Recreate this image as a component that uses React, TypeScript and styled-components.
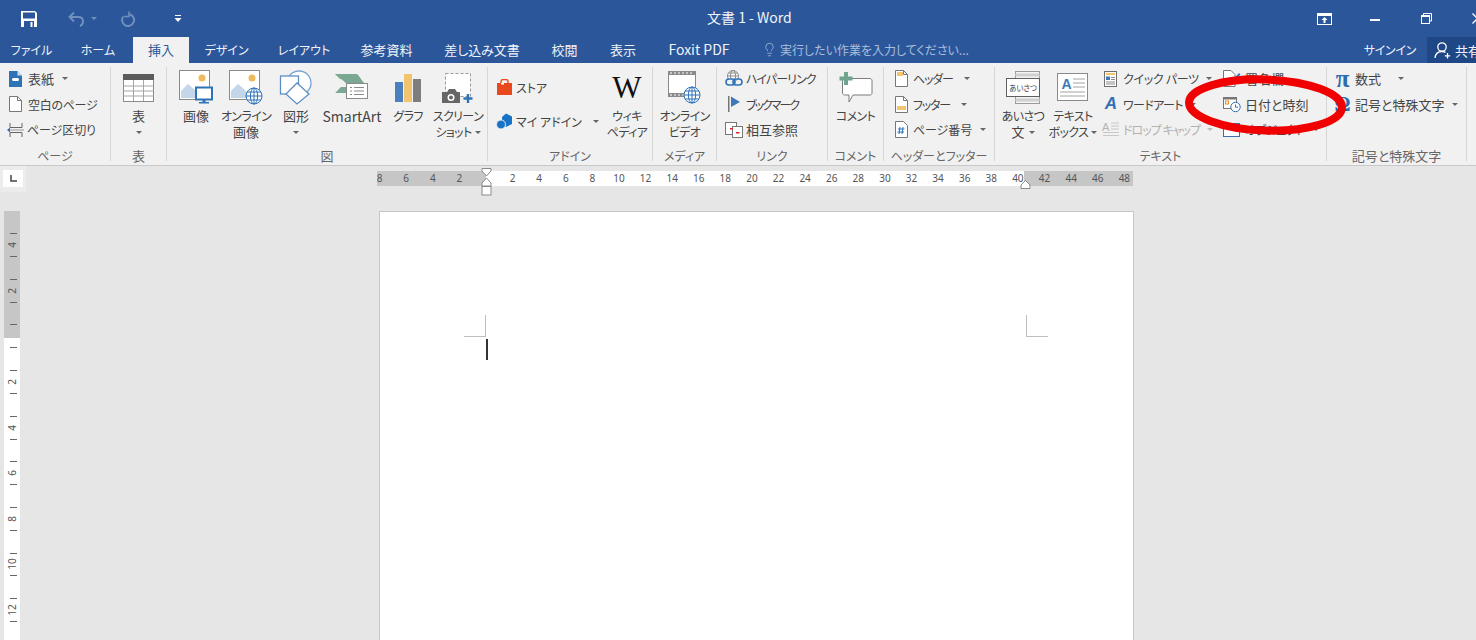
import React from 'react';
import styled, { createGlobalStyle } from 'styled-components';
import { Lightbulb } from 'lucide-react';

const GlobalStyle = createGlobalStyle`
  html, body {
    margin: 0;
    padding: 0;
    background: #e6e6e6;
    overflow: hidden;
  }
  body {
    font-family: "Noto Sans CJK JP", "Noto Sans", sans-serif;
    font-size: 12px;
    font-feature-settings: "palt";
  }
`;

const Window = styled.div`
  position: relative;
  width: 1476px;
  height: 640px;
  overflow: hidden;
  display: flex;
  flex-direction: column;
`;

const TitleBar = styled.div`
  height: 37px;
  flex: none;
  background: #2b579a;
  display: flex;
  align-items: center;
  color: #fff;
`;

const QuickAccess = styled.div`
  width: 707px;
  flex: none;
  display: flex;
  align-items: center;
  padding-left: 21px;
  box-sizing: border-box;
`;

const QuickSlot = styled.div<{ $w: number }>`
  width: ${p => p.$w}px;
  flex: none;
  display: flex;
  align-items: center;
`;

const DocTitle = styled.div`
  font-size: 14px;
  color: #f2f5fa;
  white-space: nowrap;
  padding-bottom: 3px;
`;

const WindowControls = styled.div`
  margin-left: auto;
  display: flex;
  width: 204px;
  flex: none;
  margin-right: -27px;
`;

const WindowButton = styled.div`
  width: 51px;
  height: 37px;
  flex: none;
  display: flex;
  align-items: center;
  justify-content: center;
`;

const TabBar = styled.div`
  height: 26px;
  flex: none;
  background: #2b579a;
  display: flex;
  align-items: stretch;
  overflow: hidden;
`;

const Tab = styled.div<{ $w: number; $active?: boolean; $fs?: number }>`
  width: ${p => p.$w}px;
  flex: none;
  box-sizing: border-box;
  padding-bottom: 2px;
  display: flex;
  align-items: center;
  justify-content: center;
  white-space: nowrap;
  font-size: ${p => p.$fs ?? 12}px;
  color: ${p => (p.$active ? '#2b579a' : '#f0f3f8')};
  background: ${p => (p.$active ? '#f1f1f1' : 'transparent')};
`;

const TellMe = styled.div`
  display: flex;
  align-items: center;
  gap: 3px;
  margin-left: 16px;
  padding-bottom: 2px;
  color: #a9bedb;
  white-space: nowrap;
`;

const Account = styled.div`
  margin-left: auto;
  display: flex;
  align-items: stretch;
  color: #f0f3f8;
`;

const SignIn = styled.div`
  display: flex;
  align-items: center;
  margin-right: 11px;
  padding-bottom: 2px;
  letter-spacing: -0.3px;
`;

const Share = styled.div`
  width: 49px;
  background: #1f4785;
  display: flex;
  align-items: center;
  gap: 3px;
  padding-left: 7px;
  box-sizing: border-box;
  white-space: nowrap;
  overflow: hidden;
  font-size: 13px;

  svg {
    flex: none;
  }
`;

const Ribbon = styled.div`
  height: 103px;
  flex: none;
  box-sizing: border-box;
  background: #f1f1f1;
  border-bottom: 1px solid #c9c9c9;
  padding-top: 4px;
  display: flex;
  align-items: flex-start;
`;

const Group = styled.div<{ $w: number }>`
  width: ${p => p.$w}px;
  height: 94px;
  flex: none;
  box-sizing: border-box;
  display: flex;
  flex-direction: column;
  border-right: 1px solid #d6d6d6;
`;

const GroupBody = styled.div<{ $pl?: number }>`
  flex: 1;
  display: flex;
  align-items: flex-start;
  padding-left: ${p => p.$pl ?? 0}px;
  color: #444;
  min-height: 0;
`;

const GroupLabel = styled.div<{ $k?: boolean }>`
  height: 13px;
  line-height: 13px;
  text-align: center;
  color: #666;
  white-space: nowrap;
  font-size: ${p => (p.$k ? '13px' : '12px')};
  transform: translateY(1px);
`;

const LargeButton = styled.div<{ $w: number }>`
  width: ${p => p.$w}px;
  flex: none;
  display: flex;
  flex-direction: column;
  align-items: center;
`;

const LargeIcon = styled.div`
  height: 41px;
  display: flex;
  align-items: center;
  justify-content: center;
`;

const LargeText = styled.div<{ $latin?: boolean; $k?: boolean }>`
  height: 16px;
  line-height: 16px;
  white-space: nowrap;
  font-size: ${p => (p.$latin ? '14px' : p.$k ? '13px' : '12px')};
  letter-spacing: ${p => (p.$latin || p.$k ? '0' : '-0.6px')};
  display: flex;
  align-items: center;
  justify-content: center;
`;

const SmallStack = styled.div<{ $w?: number; $top?: number; $ml?: number }>`
  width: ${p => (p.$w ? `${p.$w}px` : 'auto')};
  flex: none;
  display: flex;
  flex-direction: column;
  margin-top: ${p => p.$top ?? -1}px;
  margin-left: ${p => p.$ml ?? 0}px;
`;

const SmallRow = styled.div<{ $disabled?: boolean; $h?: number; $gap?: number; $k?: boolean; $ls?: number }>`
  height: ${p => p.$h ?? 25.5}px;
  display: flex;
  align-items: center;
  gap: ${p => p.$gap ?? 4}px;
  white-space: nowrap;
  font-size: ${p => (p.$k ? '13px' : '12px')};
  letter-spacing: ${p => (p.$k ? 0 : p.$ls ?? -0.6)}px;
  color: ${p => (p.$disabled ? '#b1b1b1' : '#444')};
`;

const SmallIcon = styled.div<{ $w?: number }>`
  width: ${p => p.$w ?? 17}px;
  flex: none;
  display: flex;
  align-items: center;
  justify-content: center;
`;

const Caret = styled.span<{ $ml?: number; $light?: boolean }>`
  display: inline-block;
  width: 0;
  height: 0;
  margin-left: ${p => p.$ml ?? 4}px;
  border-left: 3px solid transparent;
  border-right: 3px solid transparent;
  border-top: 3px solid ${p => (p.$light ? '#bbb' : '#666')};
`;

const SymbolGlyph = styled.span<{ $size: number }>`
  font-family: "Liberation Serif", serif;
  font-size: ${p => p.$size}px;
  line-height: 20px;
  color: #2b6cb0;
  font-weight: bold;
`;

const WikiGlyph = styled.span`
  font-family: "Liberation Serif", serif;
  font-size: 31px;
  line-height: 30px;
  color: #111;
`;

const WordArtGlyph = styled.span`
  font-family: "Liberation Sans", sans-serif;
  font-size: 17px;
  line-height: 16px;
  font-style: italic;
  font-weight: bold;
  color: #2f6fb5;
`;

const Workspace = styled.div`
  flex: 1;
  min-height: 0;
  background: #e6e6e6;
  display: flex;
  flex-direction: column;
`;

const RulerRow = styled.div`
  height: 45px;
  flex: none;
  display: flex;
  align-items: flex-start;
`;

const CornerBox = styled.div`
  width: 26px;
  height: 26px;
  flex: none;
  background: #ececec;
  box-sizing: border-box;
  padding: 4px 3px 5px 3px;
`;

const CornerInner = styled.div`
  width: 20px;
  height: 17px;
  background: #fff;
  display: flex;
  align-items: center;
  justify-content: center;
`;

const HRuler = styled.div`
  position: relative;
  margin-left: 351px;
  margin-top: 5px;
  width: 756px;
  height: 15px;
  flex: none;
  display: flex;
`;

const HSegment = styled.div<{ $w: number; $white?: boolean; $pl?: number; $pr?: number; $end?: boolean }>`
  width: ${p => p.$w}px;
  flex: none;
  box-sizing: border-box;
  height: 15px;
  display: flex;
  justify-content: ${p => (p.$end ? 'flex-end' : 'flex-start')};
  padding-left: ${p => p.$pl ?? 0}px;
  padding-right: ${p => p.$pr ?? 0}px;
  background: ${p => (p.$white ? '#fff' : '#c6c6c6')};
  overflow: hidden;
`;

const HNumber = styled.span`
  width: 26.6px;
  flex: none;
  text-align: center;
  font-family: "Noto Sans", sans-serif;
  font-size: 10px;
  line-height: 15px;
  color: #555;
`;

const IndentLeft = styled.svg`
  position: absolute;
  left: 104px;
  top: -3px;
`;

const IndentRight = styled.svg`
  position: absolute;
  left: 643px;
  top: 9px;
`;

const Body = styled.div`
  flex: 1;
  min-height: 0;
  display: flex;
  overflow: hidden;
`;

const VRuler = styled.div`
  width: 16px;
  flex: none;
  margin-left: 4px;
  margin-top: -1px;
  display: flex;
  flex-direction: column;
`;

const VSegment = styled.div<{ $h?: number; $white?: boolean; $pt: number }>`
  height: ${p => (p.$h ? `${p.$h}px` : 'auto')};
  flex: ${p => (p.$h ? 'none' : '1')};
  box-sizing: border-box;
  padding-top: ${p => p.$pt}px;
  background: ${p => (p.$white ? '#fff' : '#c6c6c6')};
  overflow: hidden;
  display: flex;
  flex-direction: column;
`;

const VCell = styled.div`
  height: 11.4px;
  flex: none;
  display: flex;
  align-items: center;
  justify-content: center;
`;

const Tick = styled.span`
  width: 7px;
  height: 1px;
  background: #666;
  margin-left: 2px;
`;

const VNumber = styled.span`
  display: inline-block;
  transform: rotate(-90deg);
  font-family: "Noto Sans", sans-serif;
  font-size: 10px;
  line-height: 10px;
  color: #555;
`;

const Page = styled.div`
  width: 755px;
  height: 520px;
  margin-left: 359px;
  flex: none;
  box-sizing: border-box;
  background: #fff;
  border: 1px solid #c6c6c6;
  padding: 103px 85px 0 84px;
`;

const MarkRow = styled.div`
  display: flex;
  justify-content: space-between;
`;

const CropMark = styled.div<{ $right?: boolean }>`
  width: 21px;
  height: 21px;
  border-bottom: 1px solid #bdbdbd;
  ${p => (p.$right ? 'border-left: 1px solid #bdbdbd;' : 'border-right: 1px solid #bdbdbd;')}
`;

const Caretline = styled.div`
  width: 1.5px;
  height: 21px;
  margin: 2px 0 0 22px;
  background: #333;
`;

const Annotation = styled.svg`
  position: absolute;
  left: 1176px;
  top: 66px;
  pointer-events: none;
`;

const Svg: React.FC<{ w: number; h: number; children: React.ReactNode }> = ({ w, h, children }) => (
  <svg width={w} height={h} viewBox={`0 0 ${w} ${h}`} fill="none">{children}</svg>
);

const BLUE = '#2f73b7';

const SaveIcon = () => (
  <Svg w={16} h={16}>
    <path d="M0 0H14L16 2V16H0Z" fill="#fff" />
    <rect x="2" y="1.5" width="12" height="6" fill="#2b579a" />
    <rect x="3" y="10" width="10" height="6" fill="#2b579a" />
    <rect x="9.5" y="11" width="2" height="5" fill="#fff" />
  </Svg>
);

const UndoIcon = () => (
  <Svg w={32} h={16}>
    <path d="M6 1.5L1.5 6L6 10.5M2 6H10.5C13.5 6 15 8 15 10.5C15 12.5 14 14 12 15" stroke="#6f8fbd" strokeWidth="2" />
    <path d="M23 6L29 6L26 9Z" fill="#6f8fbd" />
  </Svg>
);

const RedoIcon = () => (
  <Svg w={16} h={16}>
    <path d="M9.5 3.2A6 6 0 1 1 3.2 5.5" stroke="#6f8fbd" strokeWidth="2" />
    <path d="M9 0.5V5.5H4" stroke="#6f8fbd" strokeWidth="1.6" />
  </Svg>
);

const CustomizeIcon = () => (
  <Svg w={8} h={8}>
    <rect x="1" y="0" width="6" height="1" fill="#fff" />
    <path d="M0.5 3H7.5L4 7Z" fill="#fff" />
  </Svg>
);

const RibbonDisplayIcon = () => (
  <Svg w={15} h={12}>
    <rect x="0.5" y="0.5" width="14" height="11" stroke="#fff" />
    <rect x="1" y="1" width="13" height="2" fill="#fff" />
    <path d="M7.5 4L10.5 7H8.5V10H6.5V7H4.5Z" fill="#fff" />
  </Svg>
);

const MinimizeIcon = () => (
  <Svg w={11} h={11}><rect x="0" y="6" width="10" height="2" fill="#fff" /></Svg>
);

const RestoreIcon = () => (
  <Svg w={11} h={11}>
    <rect x="0.5" y="2.5" width="8" height="8" stroke="#fff" />
    <path d="M2.5 2V0.5H10.5V8H9" stroke="#fff" />
    <rect x="0" y="2" width="9" height="2" fill="#fff" />
  </Svg>
);

const CloseIcon = () => (
  <Svg w={11} h={11}><path d="M0.5 0.5L10.5 10.5M10.5 0.5L0.5 10.5" stroke="#fff" strokeWidth="1.3" /></Svg>
);

const ShareIcon = () => (
  <Svg w={18} h={18}>
    <circle cx="8" cy="6" r="4.2" stroke="#fff" strokeWidth="1.3" />
    <path d="M1 17C1.5 12.5 4 10.5 8 10.5C9.5 10.5 10.5 10.8 11.5 11.4" stroke="#fff" strokeWidth="1.3" />
    <path d="M13.5 12V17.5M10.8 14.8H16.2" stroke="#fff" strokeWidth="1.3" />
  </Svg>
);

const CoverIcon = () => (
  <Svg w={13} h={16}>
    <path d="M0 0H8.5L13 4.5V16H0Z" fill={BLUE} />
    <path d="M8.5 0L13 4.5H8.5Z" fill="#cfe0f1" />
    <rect x="3" y="7" width="7" height="3" rx="1.5" fill="#fff" />
  </Svg>
);

const BlankIcon = () => (
  <Svg w={13} h={16}>
    <path d="M0.5 0.5H8.5L12.5 4.5V15.5H0.5Z" fill="#fff" stroke="#777" />
    <path d="M8.5 0.5V4.5H12.5" stroke="#777" />
  </Svg>
);

const PageBreakIcon = () => (
  <Svg w={17} h={16}>
    <path d="M3 1V5.5H15V1M3 15V10.5H15V15" stroke="#666" />
    <path d="M0 8L3 5.5V10.5Z" fill={BLUE} />
    <rect x="3" y="7.5" width="14" height="1" fill="#999" />
  </Svg>
);

const TableIcon = () => (
  <Svg w={31} h={28}>
    <rect x="0.5" y="0.5" width="30" height="27" fill="#fff" stroke="#8a8a8a" />
    <rect x="0" y="0" width="31" height="6" fill="#5c5c5c" />
    <path d="M0.5 12H30.5M0.5 17H30.5M0.5 22H30.5M10.5 6V27M20.5 6V27" stroke="#a6a6a6" />
  </Svg>
);

const PictureFrame = () => (
  <>
    <rect x="0.5" y="0.5" width="30" height="29" fill="#fff" stroke="#8a8a8a" />
    <circle cx="23" cy="8" r="3.5" fill="#f0b95c" />
    <path d="M2 28V21L9 14L16 20L22 28Z" fill="#c4d6ea" />
  </>
);

const PictureIcon = () => (
  <Svg w={34} h={35}>
    <PictureFrame />
    <rect x="17" y="17.5" width="16" height="12" fill="#fff" stroke={BLUE} strokeWidth="2" />
    <rect x="23.5" y="30" width="3" height="2" fill={BLUE} />
    <rect x="20" y="32" width="10" height="1.5" fill={BLUE} />
  </Svg>
);

const GlobeMark: React.FC<{ cx: number; cy: number; r: number }> = ({ cx, cy, r }) => (
  <g stroke={BLUE} strokeWidth="1">
    <circle cx={cx} cy={cy} r={r} fill="#fff" />
    <ellipse cx={cx} cy={cy} rx={r * 0.45} ry={r} />
    <path d={`M${cx - r} ${cy}H${cx + r}M${cx - r + 1} ${cy - r * 0.5}H${cx + r - 1}M${cx - r + 1} ${cy + r * 0.5}H${cx + r - 1}M${cx} ${cy - r}V${cy + r}`} />
  </g>
);

const OnlinePictureIcon = () => (
  <Svg w={34} h={35}>
    <PictureFrame />
    <GlobeMark cx={25} cy={26} r={8} />
  </Svg>
);

const ShapesIcon = () => (
  <Svg w={34} h={35}>
    <circle cx="20" cy="13" r="12" fill="#fff" stroke="#7aa5d2" strokeWidth="1.3" />
    <rect x="1.5" y="6" width="18" height="18" fill="#fff" stroke="#5e8fc4" strokeWidth="1.3" />
    <path d="M18 13L30 24L18 34L7 24Z" fill="#fff" stroke="#5e8fc4" strokeWidth="1.3" />
  </Svg>
);

const SmartArtIcon = () => (
  <Svg w={34} h={30}>
    <path d="M0 1H22L29 10H11Z" fill="#7ba892" />
    <path d="M0 20L6 14H12V20Z" fill="#7ba892" />
    <path d="M0 1L8 10L0 20Z" fill="#f1f1f1" />
    <path d="M0 1H22L26 6H5Z" fill="#7ba892" />
    <rect x="11.5" y="10.5" width="21" height="15" fill="#fff" stroke="#8a8a8a" />
    <path d="M15 14.5H17M19 14.5H29M15 18H17M19 18H29M15 21.5H17M19 21.5H29" stroke="#8a8a8a" />
  </Svg>
);

const ChartIcon = () => (
  <Svg w={27} h={30}>
    <rect x="0" y="9" width="8" height="20" fill="#4a80bd" />
    <rect x="9" y="1" width="8" height="28" fill="#f2c46f" />
    <rect x="18" y="6" width="8" height="23" fill="#7e7e7e" />
  </Svg>
);

const ScreenshotIcon = () => (
  <Svg w={32} h={32}>
    <rect x="3.5" y="1.5" width="25" height="23" fill="#fff" stroke="#9a9a9a" strokeDasharray="3 2" />
    <path d="M0 20H5L7 17H13L15 20H18V31H0Z" fill="#666" />
    <circle cx="9" cy="25.5" r="3.5" fill="#fff" />
    <circle cx="9" cy="25.5" r="2" fill="#666" />
    <path d="M26 22V31M21.5 26.5H30.5" stroke={BLUE} strokeWidth="2.4" />
  </Svg>
);

const StoreIcon = () => (
  <Svg w={17} h={17}>
    <path d="M1 4H16V16H1Z" fill="#e8481c" />
    <path d="M5 5V2.5C5 1 6 0.5 7 0.5H10C11 0.5 12 1 12 2.5V5" stroke="#e8481c" strokeWidth="1.4" />
    <rect x="5" y="4" width="3" height="1.5" fill="#fff" />
  </Svg>
);

const AddinIcon = () => (
  <Svg w={17} h={17}>
    <path d="M10 0.5L16 3.5V11L10 14L6 12V4Z" fill="#1673c5" />
    <circle cx="5" cy="11.5" r="4.5" fill="#1673c5" stroke="#f1f1f1" />
  </Svg>
);

const VideoIcon = () => (
  <Svg w={33} h={33}>
    <rect x="0.5" y="0.5" width="27" height="25" fill="#fff" stroke="#8a8a8a" />
    <rect x="0" y="0" width="28" height="4" fill="#8a8a8a" />
    <rect x="0" y="22" width="28" height="4" fill="#8a8a8a" />
    <path d="M2 2H26M2 24H26" stroke="#fff" strokeDasharray="2 2" />
    <GlobeMark cx={24} cy={24} r={8} />
  </Svg>
);

const HyperlinkIcon = () => (
  <Svg w={18} h={17}>
    <g stroke="#8a8a8a">
      <circle cx="8" cy="6" r="5.5" fill="#fff" />
      <ellipse cx="8" cy="6" rx="2.5" ry="5.5" />
      <path d="M2.5 6H13.5M3.5 3H12.5" />
    </g>
    <rect x="1" y="9" width="9" height="6" rx="3" fill="#f1f1f1" stroke="#2f73b7" strokeWidth="1.6" />
    <rect x="8" y="9" width="9" height="6" rx="3" stroke="#2f73b7" strokeWidth="1.6" />
  </Svg>
);

const BookmarkIcon = () => (
  <Svg w={14} h={17}>
    <rect x="1" y="0" width="1.5" height="16" fill="#777" />
    <path d="M4 0.5L13 6L4 11Z" fill="#3d79b8" />
  </Svg>
);

const CrossRefIcon = () => (
  <Svg w={18} h={16}>
    <rect x="0.5" y="0.5" width="11" height="12" fill="#fff" stroke="#777" />
    <rect x="7.5" y="4.5" width="10" height="11" fill="#fff" stroke="#777" />
    <rect x="5" y="6" width="3" height="1.5" fill="#d92b1f" />
    <rect x="11" y="10" width="3.5" height="1.5" fill="#d92b1f" />
  </Svg>
);

const CommentIcon = () => (
  <Svg w={34} h={31}>
    <path d="M5.5 6.5H31C32 6.5 33 7.5 33 8.5V21C33 22 32 23 31 23H14L10 30V23H5.5C4.5 23 3.5 22 3.5 21V8.5C3.5 7.5 4.5 6.5 5.5 6.5Z" fill="#fff" stroke="#7d7d7d" />
    <path d="M7 0V13M0.5 6.5H13.5" stroke="#6fa58f" strokeWidth="4" />
  </Svg>
);

const HeaderIcon: React.FC<{ band: 'top' | 'bottom' }> = ({ band }) => (
  <Svg w={13} h={17}>
    <path d="M0.5 0.5H8.5L12.5 4.5V16.5H0.5Z" fill="#fff" stroke="#777" />
    <path d="M8.5 0.5V4.5H12.5" stroke="#777" />
    <rect x="2" y={band === 'top' ? 2 : 10} width={band === 'top' ? 6 : 9} height="4" fill="#f2c46f" />
  </Svg>
);

const PageNumberIcon = () => (
  <Svg w={13} h={17}>
    <path d="M0.5 0.5H8.5L12.5 4.5V16.5H0.5Z" fill="#fff" stroke="#777" />
    <path d="M5 6L4 13M8 6L7 13M3 8H9.5M2.5 11H9" stroke={BLUE} />
  </Svg>
);

const GreetingIcon = () => (
  <Svg w={35} h={34}>
    <rect x="9.5" y="0.5" width="24" height="32" fill="#f3f3f3" stroke="#9a9a9a" />
    <rect x="9.5" y="2.5" width="24" height="3" fill="#d0d0d0" />
    <rect x="9.5" y="27.5" width="24" height="3" fill="#d0d0d0" />
    <rect x="0.5" y="7.5" width="33" height="18" fill="#fff" stroke="#5f5f5f" />
    <text x="3" y="20" fontSize="8.5" fill="#444" fontFamily="Noto Sans CJK JP" textLength="28" lengthAdjust="spacingAndGlyphs">あいさつ</text>
  </Svg>
);

const TextBoxIcon = () => (
  <Svg w={32} h={29}>
    <rect x="0.5" y="0.5" width="30" height="27" fill="#fff" stroke="#8a8a8a" />
    <text x="4.5" y="16" fontSize="14" fontWeight="bold" fill="#3d79b8" fontFamily="Liberation Sans">A</text>
    <path d="M16 6H28M16 10H28M16 14H28M3 19H28M3 23H28" stroke="#a3a3a3" />
  </Svg>
);

const QuickPartsIcon = () => (
  <Svg w={13} h={16}>
    <rect x="0.5" y="0.5" width="12" height="15" fill="#fff" stroke="#6f6f6f" />
    <rect x="2" y="2" width="9" height="2" fill="#f2c46f" />
    <rect x="2" y="5.5" width="4" height="3.5" fill="#3d79b8" />
    <path d="M7 6.5H11M7 8.5H11M2 11H11M2 13H11" stroke="#8a8a8a" />
  </Svg>
);

const DropCapIcon = () => (
  <Svg w={18} h={17}>
    <text x="0" y="10" fontSize="11" fill="#b3b3b3" fontFamily="Liberation Sans">A</text>
    <path d="M9 2H17M9 5H17M9 8H17M1 11.5H17M1 14.5H17" stroke="#c8c8c8" />
  </Svg>
);

const SignatureIcon = () => (
  <Svg w={18} h={17}>
    <path d="M0.5 0.5H8L12 4.5V16.5H0.5Z" fill="#fff" stroke="#777" />
    <path d="M8 12L16 3L17.5 4.5L9.5 13L7.5 14Z" fill={BLUE} />
  </Svg>
);

const DateTimeIcon = () => (
  <Svg w={18} h={17}>
    <rect x="0.5" y="1.5" width="13" height="11" fill="#fff" stroke="#777" />
    <rect x="0" y="1" width="14" height="2.5" fill="#777" />
    <rect x="2.5" y="5" width="3" height="3" fill="none" stroke="#e58a2e" />
    <circle cx="12.5" cy="11" r="4.7" fill="#fff" stroke={BLUE} />
    <path d="M12.5 8.5V11.2H15" stroke={BLUE} />
  </Svg>
);

const ObjectIcon = () => (
  <Svg w={18} h={14}>
    <rect x="0.5" y="0.5" width="16" height="13" fill="#fff" stroke="#3d6ea5" />
    <rect x="0" y="0" width="17" height="4" fill="#3d6ea5" />
  </Svg>
);

const App: React.FC = () => {
  const hLeft = [8, 6, 4, 2];
  const hMid = Array.from({ length: 20 }, (_, i) => (i + 1) * 2);
  const hRight = [42, 44, 46, 48];
  const vWhite = [2, 4, 6, 8, 10, 12];

  const vCell = (n: number) => (
    <React.Fragment key={n}>
      <VCell><Tick /></VCell>
      <VCell><VNumber>{n}</VNumber></VCell>
      <VCell><Tick /></VCell>
      <VCell />
    </React.Fragment>
  );

  return (
    <Window>
      <GlobalStyle />
      <TitleBar>
        <QuickAccess>
          <QuickSlot $w={47}><SaveIcon /></QuickSlot>
          <QuickSlot $w={52}><UndoIcon /></QuickSlot>
          <QuickSlot $w={54}><RedoIcon /></QuickSlot>
          <QuickSlot $w={10}><CustomizeIcon /></QuickSlot>
        </QuickAccess>
        <DocTitle>文書 1 - Word</DocTitle>
        <WindowControls>
          <WindowButton><RibbonDisplayIcon /></WindowButton>
          <WindowButton><MinimizeIcon /></WindowButton>
          <WindowButton><RestoreIcon /></WindowButton>
          <WindowButton><CloseIcon /></WindowButton>
        </WindowControls>
      </TitleBar>

      <TabBar>
        <Tab $w={63}>ファイル</Tab>
        <Tab $w={70}>ホーム</Tab>
        <Tab $w={56} $active $fs={13}>挿入</Tab>
        <Tab $w={75}>デザイン</Tab>
        <Tab $w={80}>レイアウト</Tab>
        <Tab $w={85} $fs={13}>参考資料</Tab>
        <Tab $w={106} $fs={13}>差し込み文書</Tab>
        <Tab $w={59} $fs={13}>校閲</Tab>
        <Tab $w={58} $fs={13}>表示</Tab>
        <Tab $w={94} $fs={14}>Foxit PDF</Tab>
        <TellMe>
          <Lightbulb size={15} strokeWidth={1.2} />
          実行したい作業を入力してください...
        </TellMe>
        <Account>
          <SignIn>サインイン</SignIn>
          <Share><ShareIcon />共有</Share>
        </Account>
      </TabBar>

      <Ribbon>
        <Group $w={111}>
          <GroupBody $pl={7}>
            <SmallStack>
              <SmallRow $k><SmallIcon><CoverIcon /></SmallIcon>表紙<Caret /></SmallRow>
              <SmallRow $ls={-0.3}><SmallIcon><BlankIcon /></SmallIcon>空白のページ</SmallRow>
              <SmallRow $gap={3} $ls={-0.1}><SmallIcon><PageBreakIcon /></SmallIcon>ページ区切り</SmallRow>
            </SmallStack>
          </GroupBody>
          <GroupLabel>ページ</GroupLabel>
        </Group>

        <Group $w={56}>
          <GroupBody>
            <LargeButton $w={55}>
              <LargeIcon><TableIcon /></LargeIcon>
              <LargeText $k>表</LargeText>
              <LargeText><Caret $ml={0} /></LargeText>
            </LargeButton>
          </GroupBody>
          <GroupLabel $k>表</GroupLabel>
        </Group>

        <Group $w={321}>
          <GroupBody $pl={4}>
            <LargeButton $w={50}>
              <LargeIcon><PictureIcon /></LargeIcon>
              <LargeText $k>画像</LargeText>
            </LargeButton>
            <LargeButton $w={50}>
              <LargeIcon><OnlinePictureIcon /></LargeIcon>
              <LargeText>オンライン</LargeText>
              <LargeText $k>画像</LargeText>
            </LargeButton>
            <LargeButton $w={50}>
              <LargeIcon><ShapesIcon /></LargeIcon>
              <LargeText $k>図形</LargeText>
              <LargeText><Caret $ml={0} /></LargeText>
            </LargeButton>
            <LargeButton $w={62}>
              <LargeIcon><SmartArtIcon /></LargeIcon>
              <LargeText $latin>SmartArt</LargeText>
            </LargeButton>
            <LargeButton $w={50}>
              <LargeIcon><ChartIcon /></LargeIcon>
              <LargeText>グラフ</LargeText>
            </LargeButton>
            <LargeButton $w={50}>
              <LargeIcon><ScreenshotIcon /></LargeIcon>
              <LargeText>スクリーン</LargeText>
              <LargeText>ショット<Caret $ml={3} /></LargeText>
            </LargeButton>
          </GroupBody>
          <GroupLabel $k>図</GroupLabel>
        </Group>

        <Group $w={165}>
          <GroupBody $pl={8}>
            <SmallStack $w={107} $top={3}>
              <SmallRow $h={34} $gap={3} $ls={0}><SmallIcon><StoreIcon /></SmallIcon>ストア</SmallRow>
              <SmallRow $h={34} $gap={3} $ls={0}><SmallIcon><AddinIcon /></SmallIcon>マイ アドイン<Caret $ml={8} /></SmallRow>
            </SmallStack>
            <LargeButton $w={48}>
              <LargeIcon><WikiGlyph>W</WikiGlyph></LargeIcon>
              <LargeText>ウィキ</LargeText>
              <LargeText>ペディア</LargeText>
            </LargeButton>
          </GroupBody>
          <GroupLabel>アドイン</GroupLabel>
        </Group>

        <Group $w={64}>
          <GroupBody>
            <LargeButton $w={63}>
              <LargeIcon><VideoIcon /></LargeIcon>
              <LargeText>オンライン</LargeText>
              <LargeText>ビデオ</LargeText>
            </LargeButton>
          </GroupBody>
          <GroupLabel>メディア</GroupLabel>
        </Group>

        <Group $w={111}>
          <GroupBody $pl={8}>
            <SmallStack>
              <SmallRow $gap={3} $ls={-0.9}><SmallIcon $w={18}><HyperlinkIcon /></SmallIcon>ハイパーリンク</SmallRow>
              <SmallRow $gap={3} $ls={-2}><SmallIcon $w={18}><BookmarkIcon /></SmallIcon>ブックマーク</SmallRow>
              <SmallRow $gap={3} $k><SmallIcon $w={18}><CrossRefIcon /></SmallIcon>相互参照</SmallRow>
            </SmallStack>
          </GroupBody>
          <GroupLabel>リンク</GroupLabel>
        </Group>

        <Group $w={56}>
          <GroupBody>
            <LargeButton $w={55}>
              <LargeIcon><CommentIcon /></LargeIcon>
              <LargeText>コメント</LargeText>
            </LargeButton>
          </GroupBody>
          <GroupLabel>コメント</GroupLabel>
        </Group>

        <Group $w={111}>
          <GroupBody $pl={11}>
            <SmallStack>
              <SmallRow $gap={5} $ls={-1.2}><SmallIcon $w={13}><HeaderIcon band="top" /></SmallIcon>ヘッダー<Caret $ml={6} /></SmallRow>
              <SmallRow $gap={5} $ls={-1.2}><SmallIcon $w={13}><HeaderIcon band="bottom" /></SmallIcon>フッター<Caret $ml={6} /></SmallRow>
              <SmallRow $gap={5} $ls={-0.1}><SmallIcon $w={13}><PageNumberIcon /></SmallIcon>ページ番号<Caret $ml={3} /></SmallRow>
            </SmallStack>
          </GroupBody>
          <GroupLabel>ヘッダーとフッター</GroupLabel>
        </Group>

        <Group $w={332}>
          <GroupBody $pl={3}>
            <LargeButton $w={50}>
              <LargeIcon><GreetingIcon /></LargeIcon>
              <LargeText>あいさつ</LargeText>
              <LargeText $k>文<Caret /></LargeText>
            </LargeButton>
            <LargeButton $w={50}>
              <LargeIcon><TextBoxIcon /></LargeIcon>
              <LargeText>テキスト</LargeText>
              <LargeText>ボックス<Caret $ml={3} /></LargeText>
            </LargeButton>
            <SmallStack $w={122} $ml={3}>
              <SmallRow $gap={3} $ls={-0.3}><SmallIcon $w={19}><QuickPartsIcon /></SmallIcon>クイック パーツ<Caret /></SmallRow>
              <SmallRow $gap={3}><SmallIcon $w={19}><WordArtGlyph>A</WordArtGlyph></SmallIcon>ワードアート<Caret /></SmallRow>
              <SmallRow $disabled $gap={3} $ls={-1}><SmallIcon $w={19}><DropCapIcon /></SmallIcon>ドロップ キャップ<Caret $light /></SmallRow>
            </SmallStack>
            <SmallStack>
              <SmallRow $k><SmallIcon $w={18}><SignatureIcon /></SmallIcon>署名欄</SmallRow>
              <SmallRow $k><SmallIcon $w={18}><DateTimeIcon /></SmallIcon>日付と時刻</SmallRow>
              <SmallRow><SmallIcon $w={18}><ObjectIcon /></SmallIcon>オブジェクト<Caret /></SmallRow>
            </SmallStack>
          </GroupBody>
          <GroupLabel>テキスト</GroupLabel>
        </Group>

        <Group $w={140}>
          <GroupBody $pl={7}>
            <SmallStack>
              <SmallRow $k><SmallIcon><SymbolGlyph $size={25}>π</SymbolGlyph></SmallIcon>数式<Caret $ml={13} /></SmallRow>
              <SmallRow $k><SmallIcon><SymbolGlyph $size={20}>Ω</SymbolGlyph></SmallIcon>記号と特殊文字<Caret /></SmallRow>
            </SmallStack>
          </GroupBody>
          <GroupLabel $k>記号と特殊文字</GroupLabel>
        </Group>
      </Ribbon>

      <Workspace>
        <RulerRow>
          <CornerBox>
            <CornerInner>
              <Svg w={7} h={7}><path d="M1 0V6H7" stroke="#444" strokeWidth="1.5" /></Svg>
            </CornerInner>
          </CornerBox>
          <HRuler>
            <HSegment $w={109} $end $pr={13.3}>
              {hLeft.map(n => <HNumber key={n}>{n}</HNumber>)}
            </HSegment>
            <HSegment $w={538} $white $pl={13.3}>
              {hMid.map(n => <HNumber key={n}>{n}</HNumber>)}
            </HSegment>
            <HSegment $w={109} $pl={7.3}>
              {hRight.map(n => <HNumber key={n}>{n}</HNumber>)}
            </HSegment>
            <IndentLeft width="11" height="28" viewBox="0 0 11 28" fill="none">
              <path d="M1 0.5H10V3L5.5 8L1 3Z" fill="#fff" stroke="#8a8a8a" />
              <path d="M5.5 10L10 15V18H1V15Z" fill="#fff" stroke="#8a8a8a" />
              <rect x="1" y="18.5" width="9" height="8.5" fill="#fff" stroke="#8a8a8a" />
            </IndentLeft>
            <IndentRight width="11" height="9" viewBox="0 0 11 9" fill="none">
              <path d="M5.5 0.5L10 5V8.5H1V5Z" fill="#fff" stroke="#8a8a8a" />
            </IndentRight>
          </HRuler>
        </RulerRow>
        <Body>
          <VRuler>
            <VSegment $h={128} $pt={18}>
              {vCell(4)}
              {vCell(2)}
              <VCell><Tick /></VCell>
            </VSegment>
            <VSegment $white $pt={4.3}>
              <VCell><Tick /></VCell>
              <VCell />
              {vWhite.map(vCell)}
            </VSegment>
          </VRuler>
          <Page>
            <MarkRow>
              <CropMark />
              <CropMark $right />
            </MarkRow>
            <Caretline />
          </Page>
        </Body>
      </Workspace>

      <Annotation width="180" height="78" viewBox="0 0 180 78" fill="none">
        <ellipse cx="89.5" cy="39" rx="76.5" ry="25.5" transform="rotate(2 89.5 39)" stroke="#f00000" strokeWidth="8" />
      </Annotation>
    </Window>
  );
};

export default App;
